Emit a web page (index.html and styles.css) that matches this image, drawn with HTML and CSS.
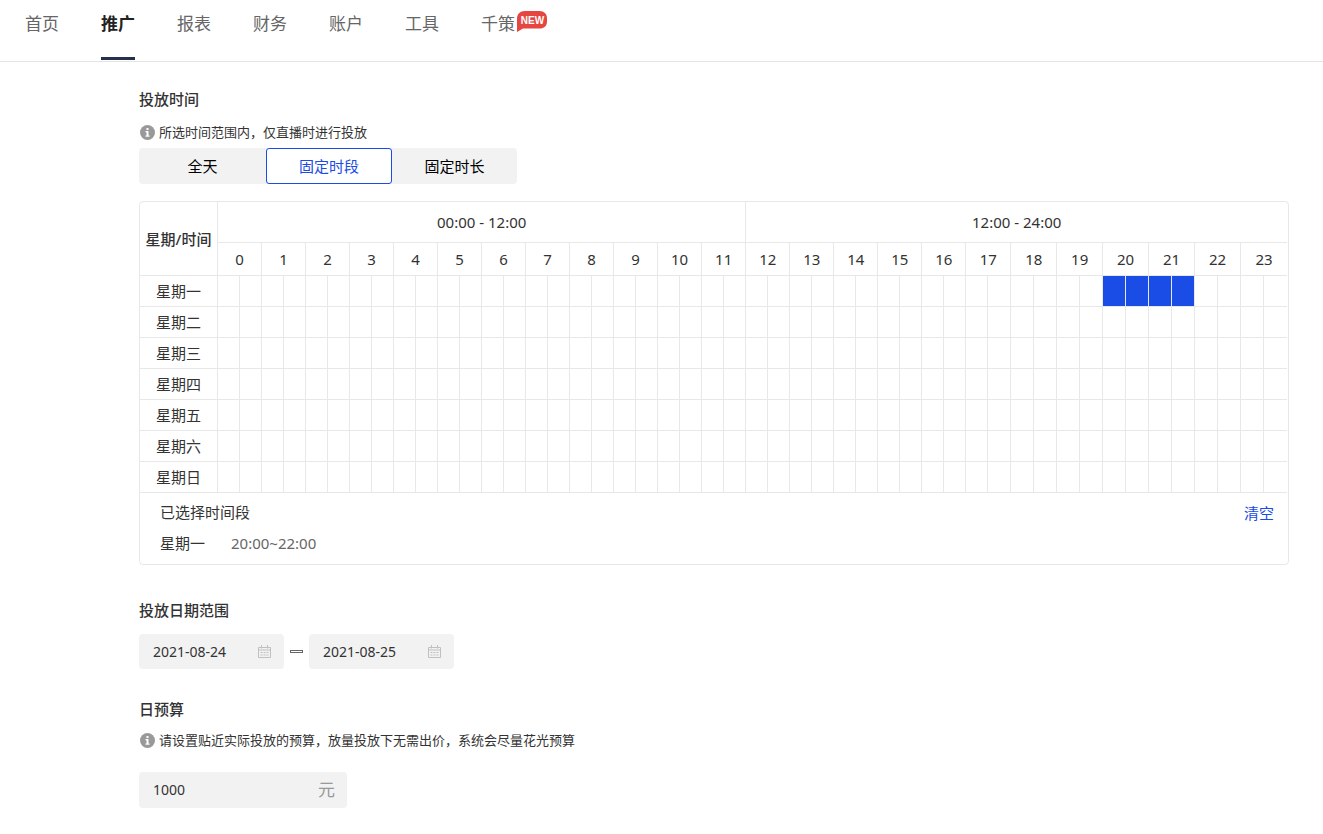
FILE: index.html
```html
<!DOCTYPE html>
<html lang="zh-CN">
<head>
<meta charset="utf-8">
<meta name="viewport" content="width=device-width, initial-scale=1">
<title>推广</title>
<link rel="stylesheet" href="styles.css">
</head>
<body>
<header class="topbar">
  <nav class="nav">
    <a class="nav-link" href="#home">首页</a>
    <a class="nav-link is-active" href="#promote" aria-current="page">推广</a>
    <a class="nav-link" href="#report">报表</a>
    <a class="nav-link" href="#finance">财务</a>
    <a class="nav-link" href="#account">账户</a>
    <a class="nav-link" href="#tools">工具</a>
    <a class="nav-link" href="#qiance">千策<svg class="nav-badge" viewBox="0 0 30 21" width="30" height="21"><path d="M8 0H22.500C27 0 30 3 30 7V10.500C30 15 27 17.500 22.500 17.500H6L0 21V8C0 3 3 0 8 0Z" fill="#e64640"/><text class="nav-badge-text" x="15.500" y="12.500" text-anchor="middle">NEW</text></svg></a>
  </nav>
</header>

<main class="page">
  <section class="section">
    <h2 class="title">投放时间</h2>
    <p class="hint">
      <svg class="info" viewBox="0 0 15 15" width="15" height="15"><circle cx="7.500" cy="7.500" r="7.500" fill="#999"/><path d="M6.500 3h2v2h-2zM5.500 6h3v4.500h1v1.200h-4v-1.200h1V7.200h-1z" fill="#fff"/></svg>
      <span>所选时间范围内，仅直播时进行投放</span>
    </p>
    <div class="segment" role="group" aria-label="投放时间">
      <button class="segment-item" type="button">全天</button>
      <button class="segment-item is-active" type="button" aria-pressed="true">固定时段</button>
      <button class="segment-item" type="button">固定时长</button>
    </div>

    <div class="schedule">
      <table class="grid">
        <colgroup><col class="day-col"><col span="35" class="slot-col"><col span="13"></colgroup>
        <thead>
          <tr class="row-range"><th class="corner" rowspan="2" scope="col">星期/时间</th><th colspan="24">00:00 - 12:00</th><th colspan="24">12:00 - 24:00</th></tr>
          <tr class="row-hours" id="hours"></tr>
        </thead>
        <tbody id="days"></tbody>
      </table>
      <div class="summary">
        <div class="summary-list">
          <div>已选择时间段</div>
          <div class="summary-row"><span>星期一</span><span class="summary-time">20:00~22:00</span></div>
        </div>
        <button class="clear" type="button">清空</button>
      </div>
    </div>
  </section>

  <section class="section section-dates">
    <h2 class="title">投放日期范围</h2>
    <div class="dates">
      <label class="field field-date"><input class="field-input" type="text" value="2021-08-24" aria-label="开始日期"><svg class="calendar" viewBox="0 0 13 13" width="13" height="13"><path d="M.5 2.500h12v10H.5zM.5 5h12M3.500 0v3.500M9.500 0v3.500" fill="none" stroke="#c0c0c0"/><path d="M2.500 7h2v1h-2zM5.500 7h2v1h-2zM8.500 7h2v1h-2zM2.500 9.500h2v1h-2zM5.500 9.500h2v1h-2zM8.500 9.500h2v1h-2z" fill="#c0c0c0"/></svg></label>
      <span class="dash"></span>
      <label class="field field-date"><input class="field-input" type="text" value="2021-08-25" aria-label="结束日期"><svg class="calendar" viewBox="0 0 13 13" width="13" height="13"><path d="M.5 2.500h12v10H.5zM.5 5h12M3.500 0v3.500M9.500 0v3.500" fill="none" stroke="#c0c0c0"/><path d="M2.500 7h2v1h-2zM5.500 7h2v1h-2zM8.500 7h2v1h-2zM2.500 9.500h2v1h-2zM5.500 9.500h2v1h-2zM8.500 9.500h2v1h-2z" fill="#c0c0c0"/></svg></label>
    </div>
  </section>

  <section class="section section-budget">
    <h2 class="title">日预算</h2>
    <p class="hint">
      <svg class="info" viewBox="0 0 15 15" width="15" height="15"><circle cx="7.500" cy="7.500" r="7.500" fill="#999"/><path d="M6.500 3h2v2h-2zM5.500 6h3v4.500h1v1.200h-4v-1.200h1V7.200h-1z" fill="#fff"/></svg>
      <span>请设置贴近实际投放的预算，放量投放下无需出价，系统会尽量花光预算</span>
    </p>
    <label class="field field-budget"><input class="field-input" type="text" value="1000" aria-label="日预算"><span class="unit">元</span></label>
  </section>
</main>
<script src="schedule.js"></script>
</body>
</html>
```

FILE: styles.css
```css
* {
  box-sizing: border-box;
}

body {
  margin: 0;
  background: #fff;
  color: #333;
  font-family: "Noto Sans", "Noto Sans CJK SC", sans-serif;
  font-size: 15px;
  line-height: 20px;
}

button,
input {
  font: inherit;
}

.topbar {
  height: 62px;
  border-bottom: 1px solid #e4e4e4;
}

.nav {
  display: flex;
  gap: 42px;
  padding-left: 25px;
}

.nav-link {
  position: relative;
  height: 60px;
  color: #666;
  font-size: 17px;
  line-height: 48px;
  text-decoration: none;
  white-space: nowrap;
}

.nav-link.is-active {
  border-bottom: 3px solid #26304a;
  color: #222;
  font-weight: 700;
}

.nav-badge {
  position: absolute;
  top: 11px;
  left: 100%;
  margin-left: 2px;
}

.nav-badge-text {
  fill: #fff;
  font-family: "Liberation Sans", Arial, sans-serif;
  font-size: 10px;
  font-weight: 700;
}

.page {
  padding: 25px 34px 26px 139px;
}

.section-dates {
  margin-top: 33px;
}

.section-budget {
  margin-top: 28px;
}

.title {
  margin: 0;
  font-size: 15px;
  font-weight: 500;
  line-height: 24px;
}

.hint {
  display: flex;
  align-items: center;
  gap: 4px;
  margin: 11px 0 0;
  font-size: 13px;
}

.section-budget .hint {
  margin-top: 9px;
}

.info {
  flex: none;
  margin-left: 1px;
}

.segment {
  display: inline-flex;
  margin-top: 6px;
  border-radius: 4px;
  background: #f2f2f2;
  vertical-align: top;
}

.segment-item {
  width: 126px;
  height: 36px;
  padding: 0;
  border: 1px solid transparent;
  border-radius: 3px;
  background: none;
  color: #000;
}

.segment-item:first-child {
  width: 127px;
}

.segment-item:last-child {
  width: 125px;
}

.segment-item.is-active {
  border-color: #1a4ce6;
  background: #fff;
  color: #1a4ce6;
}

.schedule {
  margin-top: 17px;
  padding-right: 1px;
  border: 1px solid #e8e8e8;
  border-radius: 4px;
}

.grid {
  width: 100%;
  border-collapse: separate;
  border-spacing: 0;
  table-layout: fixed;
}

.day-col {
  width: 78px;
}

.slot-col {
  width: 22px;
}

.grid th,
.grid td {
  height: 31px;
  padding: 0;
  border-right: 1px solid #e8e8e8;
  border-bottom: 1px solid #e8e8e8;
  font-weight: 400;
  text-align: center;
  white-space: nowrap;
}

.grid tr > :last-child {
  border-right: 0;
}

.grid .row-range th {
  height: 41px;
}

.grid .row-hours th {
  height: 33px;
}

.grid .row-range .corner {
  font-weight: 500;
}

.grid .is-selected {
  background: #1a4ce6;
  background-clip: padding-box;
}

.summary {
  display: flex;
  justify-content: space-between;
  align-items: flex-start;
  padding: 9px 13px 11px 20px;
}

.summary-list {
  display: grid;
  gap: 11px;
}

.summary-row {
  display: flex;
  gap: 26px;
}

.summary-time {
  color: #666;
}

.clear {
  padding: 1px 0 0;
  border: 0;
  background: none;
  color: #1a4ce6;
}

.dates {
  display: flex;
  align-items: center;
  gap: 6px;
  margin-top: 12px;
}

.field {
  display: flex;
  align-items: center;
  padding: 0 13px 0 14px;
  border-radius: 4px;
  background: #f2f2f2;
}

.field-date {
  width: 145px;
  height: 35px;
}

.field-budget {
  width: 208px;
  height: 36px;
  margin-top: 22px;
  padding-right: 12px;
}

.field-input {
  flex: 1;
  min-width: 0;
  padding: 0;
  border: 0;
  outline: 0;
  background: none;
  color: #333;
  font-size: 14px;
}

.calendar {
  flex: none;
}

.dash {
  width: 13px;
  height: 3px;
  border: 1px solid #666;
}

.unit {
  color: #999;
  font-size: 17px;
}
```

FILE: schedule.js
```js
const hours = document.getElementById('hours');
for (let h = 0; h < 24; h++) {
  const th = document.createElement('th');
  th.colSpan = 2;
  th.scope = 'col';
  th.textContent = h;
  hours.append(th);
}

// Half-hour slots chosen for each day: [first, one past last].
const selected = { 0: [40, 44] };
const body = document.getElementById('days');
[...'一二三四五六日'].forEach((name, day) => {
  const row = body.insertRow();
  const head = document.createElement('th');
  head.scope = 'row';
  head.textContent = '星期' + name;
  row.append(head);
  const [from, to] = selected[day] || [0, 0];
  for (let s = 0; s < 48; s++) {
    const cell = row.insertCell();
    if (s >= from && s < to) cell.className = 'is-selected';
  }
});
```
